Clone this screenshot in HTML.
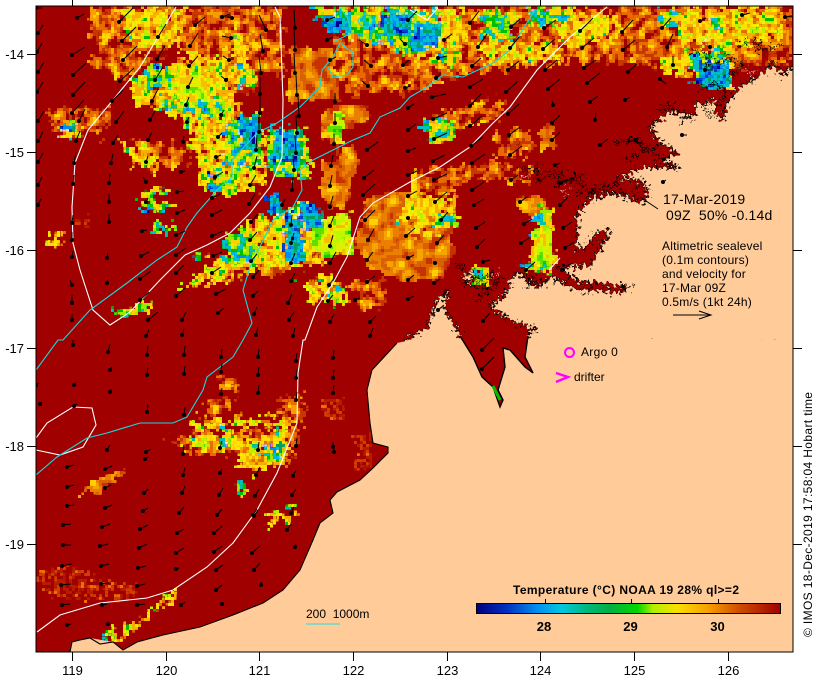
<!DOCTYPE html>
<html><head><meta charset="utf-8"><title>SST map</title>
<style>
html,body{margin:0;padding:0;background:#fff}
svg{display:block}
text{font-family:"Liberation Sans",sans-serif;fill:#000}
</style></head><body>
<svg width="820" height="680" viewBox="0 0 820 680" xmlns="http://www.w3.org/2000/svg">
<defs>
<filter id="px" filterUnits="userSpaceOnUse" x="36" y="6" width="757" height="646">
<feFlood x="37" y="7" width="1" height="1" flood-color="#000"/>
<feComposite width="3" height="3"/>
<feTile result="a"/>
<feComposite in="SourceGraphic" in2="a" operator="in"/>
<feMorphology operator="dilate" radius="1"/>
</filter>
<filter id="w" color-interpolation-filters="sRGB" filterUnits="userSpaceOnUse" x="0" y="0" width="820" height="680">
<feTurbulence type="fractalNoise" baseFrequency=".1" numOctaves="3" seed="4" result="n"/>
<feDisplacementMap in="SourceGraphic" in2="n" scale="26" xChannelSelector="R" yChannelSelector="G" result="d"/>
<feColorMatrix in="n" type="matrix" values="1 0 0 0 0 1 0 0 0 0 1 0 0 0 0 0 0 0 0 1"/>
<feComponentTransfer><feFuncR type="discrete" tableValues=".63 .63 .63 .63 .78 .91 .97 1 1 1"/><feFuncG type="discrete" tableValues="0 0 0 0 .22 .42 .62 .85 .85 .85"/><feFuncB type="discrete" tableValues="0 0"/></feComponentTransfer>
<feComposite in2="d" operator="in"/>
</filter>
<filter id="dm" color-interpolation-filters="sRGB" filterUnits="userSpaceOnUse" x="0" y="0" width="820" height="680">
<feTurbulence type="fractalNoise" baseFrequency=".2" numOctaves="2" seed="12" result="n"/>
<feDisplacementMap in="SourceGraphic" in2="n" scale="18" xChannelSelector="R" yChannelSelector="G" result="d"/>
<feColorMatrix in="n" type="matrix" values="1 0 0 0 0 1 0 0 0 0 1 0 0 0 0 0 0 0 0 1"/>
<feComponentTransfer><feFuncR type="discrete" tableValues=".63 .63 .63 .63 .63 .72 .82 .91 .91 .91"/><feFuncG type="discrete" tableValues="0 0 0 0 0 .12 .25 .45 .45 .45"/><feFuncB type="discrete" tableValues="0 0"/></feComponentTransfer>
<feComposite in2="d" operator="in"/>
</filter>
<filter id="o" color-interpolation-filters="sRGB" filterUnits="userSpaceOnUse" x="0" y="0" width="820" height="680">
<feTurbulence type="fractalNoise" baseFrequency=".07" numOctaves="2" seed="9" result="n"/>
<feDisplacementMap in="SourceGraphic" in2="n" scale="18" xChannelSelector="R" yChannelSelector="G" result="d"/>
<feColorMatrix in="n" type="matrix" values="1 0 0 0 0 1 0 0 0 0 1 0 0 0 0 0 0 0 0 1"/>
<feComponentTransfer><feFuncR type="discrete" tableValues=".78 .78 .78 .78 .86 .92 .96 1 1 1"/><feFuncG type="discrete" tableValues=".2 .2 .2 .2 .38 .5 .65 .82 .82 .82"/><feFuncB type="discrete" tableValues="0 0"/></feComponentTransfer>
<feComposite in2="d" operator="in"/>
</filter>
<filter id="m" color-interpolation-filters="sRGB" filterUnits="userSpaceOnUse" x="0" y="0" width="820" height="680">
<feTurbulence type="fractalNoise" baseFrequency=".12" numOctaves="3" seed="17" result="n"/>
<feDisplacementMap in="SourceGraphic" in2="n" scale="26" xChannelSelector="R" yChannelSelector="G" result="d"/>
<feColorMatrix in="n" type="matrix" values="1 0 0 0 0 1 0 0 0 0 1 0 0 0 0 0 0 0 0 1"/>
<feComponentTransfer><feFuncR type="discrete" tableValues=".63 .63 .63 .88 .97 1 .75 0 0 0"/><feFuncG type="discrete" tableValues="0 0 0 .44 .69 .88 .94 .75 .75 .75"/><feFuncB type="discrete" tableValues="0 0 0 0 0 0 0 0 .75 .75"/></feComponentTransfer>
<feComposite in2="d" operator="in"/>
</filter>
<filter id="c" color-interpolation-filters="sRGB" filterUnits="userSpaceOnUse" x="0" y="0" width="820" height="680">
<feTurbulence type="fractalNoise" baseFrequency=".13" numOctaves="3" seed="23" result="n"/>
<feDisplacementMap in="SourceGraphic" in2="n" scale="22" xChannelSelector="R" yChannelSelector="G" result="d"/>
<feColorMatrix in="n" type="matrix" values="1 0 0 0 0 1 0 0 0 0 1 0 0 0 0 0 0 0 0 1"/>
<feComponentTransfer><feFuncR type="discrete" tableValues="1 1 1 1 .63 0 0 0 0 0"/><feFuncG type="discrete" tableValues=".82 .82 .82 .82 .91 .75 .75 .56 0 0"/><feFuncB type="discrete" tableValues="0 0 0 0 0 0 .78 .94 .63 .63"/></feComponentTransfer>
<feComposite in2="d" operator="in"/>
</filter>
<filter id="l" color-interpolation-filters="sRGB" filterUnits="userSpaceOnUse" x="0" y="0" width="820" height="680">
<feTurbulence type="fractalNoise" baseFrequency=".08" numOctaves="2" seed="31" result="n"/>
<feDisplacementMap in="SourceGraphic" in2="n" scale="16" xChannelSelector="R" yChannelSelector="G" result="d"/>
<feColorMatrix in="n" type="matrix" values="1 0 0 0 0 1 0 0 0 0 1 0 0 0 0 0 0 0 0 1"/>
<feComponentTransfer><feFuncR type="discrete" tableValues=".97 .97 .97 .97 .88 .75 .38 0 0 0"/><feFuncG type="discrete" tableValues=".75 .75 .75 .75 .94 .97 .88 .82 .82 .82"/><feFuncB type="discrete" tableValues="0 0"/></feComponentTransfer>
<feComposite in2="d" operator="in"/>
</filter>
<filter id="b" color-interpolation-filters="sRGB" filterUnits="userSpaceOnUse" x="0" y="0" width="820" height="680">
<feTurbulence type="fractalNoise" baseFrequency=".14" numOctaves="3" seed="41" result="n"/>
<feDisplacementMap in="SourceGraphic" in2="n" scale="14" xChannelSelector="R" yChannelSelector="G" result="d"/>
<feColorMatrix in="n" type="matrix" values="1 0 0 0 0 1 0 0 0 0 1 0 0 0 0 0 0 0 0 1"/>
<feComponentTransfer><feFuncR type="discrete" tableValues="0 0"/><feFuncG type="discrete" tableValues=".63 .63 .63 .63 .75 .56 .25 0 0 0"/><feFuncB type="discrete" tableValues=".38 .38 .38 .38 .75 .94 .82 .56 .56 .56"/></feComponentTransfer>
<feComposite in2="d" operator="in"/>
</filter>
<filter id="j" filterUnits="userSpaceOnUse" x="0" y="0" width="820" height="680">
<feTurbulence type="fractalNoise" baseFrequency=".3" numOctaves="2" seed="7" result="n"/>
<feDisplacementMap in="SourceGraphic" in2="n" scale="18" xChannelSelector="R" yChannelSelector="G"/>
</filter>
<clipPath id="f"><rect x="36" y="6" width="757" height="646"/></clipPath>
<linearGradient id="cb"><stop offset="0" stop-color="#000080"/><stop offset=".1" stop-color="#0030c0"/><stop offset=".2" stop-color="#0090f0"/><stop offset=".28" stop-color="#00c8e0"/><stop offset=".36" stop-color="#00b880"/><stop offset=".44" stop-color="#00b040"/><stop offset=".53" stop-color="#00d800"/><stop offset=".58" stop-color="#b0f000"/><stop offset=".66" stop-color="#f8e000"/><stop offset=".76" stop-color="#f8a000"/><stop offset=".86" stop-color="#d05000"/><stop offset="1" stop-color="#a00000"/></linearGradient>
<path id="ar" d="M38 33l5-8M37 52l5-9M38 72l6-10M37 92l6-10M38 121l6-10M38 141l5-9M38 162l5-9M38 185l4-8M38 205l3-6
M77 18l7-4M72 55l13-8M73 75l13-12M73 95l12-13M72 113l12-13M79 121l6-12M76 141l4-10M74 163l2-11M73 184l1-9M72 223l1-8M72 240l0-8M72 257l1-6M72 285l-2-5M72 303l0-8M72 320l0-6
M119 22l14-14M122 41l14-14M123 60l14-14M120 81l14-13M112 101l11-11M116 122l8-11M113 143l5-8M111 163l2-9M109 183l1-9M109 202l0-8M109 222l0-8M107 258l1-5M107 283l1-4
M158 37l8-13M157 59l8-13M155 80l8-13M152 101l6-12M150 120l5-9M148 140l4-8M146 162l2-6M146 182l-3-5M146 202l2-4M142 231l5-1M141 256l8-4M140 279l11-8M140 300l9-8M148 320l10-8M146 336l3-6
M195 25l10-8M190 46l8-13M189 66l9-10M188 87l5-10M186 105l3-8M187 122l2-5M183 142l1-6M181 172l4-1M177 192l7-1M177 213l8-3M176 235l9-4M176 255l10-7M176 273l8-8M176 296l9-8M182 320l4-8M182 335l2-6
M222 17l8-3M232 18l-8-2M231 38l-9-2M229 60l-6-4M226 80l-5-4M221 115l3-5M218 137l4-4M216 157l5-2M215 177l8-5M212 198l8-4M212 215l10-5M212 236l11-5M213 256l9-4M212 273l9-6M216 294l10-5M218 313l6-5
M266 30l-7-15M263 51l-3-17M261 73l-2-18M260 94l0-17M260 113l0-17M259 132l0-17M256 150l1-15M254 168l3-12M250 185l6-10M249 204l6-10M251 222l7-8M250 240l7-8M251 261l6-7M253 277l6-7M253 296l5-5M254 314l3-7M256 335l2-8
M295 28l-1-18M295 50l-1-20M295 73l-1-20M297 95l-1-20M299 116l-1-20M297 133l-1-18M296 153l-1-17M294 170l-1-15M292 190l1-12M282 205l3-6M291 225l1-10M291 243l3-10M291 263l4-10M291 281l4-8M288 303l4-9M289 320l5-8M293 336l2-8
M327 20l8-3M327 40l6-3M330 60l6-3M335 102l0-9M335 123l0-10M334 144l0-10M331 166l2-11M330 186l2-11M330 207l3-11M330 226l4-10M330 246l3-11M330 263l6-11M329 285l6-8M328 301l5-6M330 322l4-8
M367 45l-8-5M371 66l-7-6M368 86l-6-5M367 150l11-8M364 178l10-8M363 195l12-11M365 220l10-10M368 240l6-11M367 260l6-8M367 282l8-6M355 300l5-2M370 322l6-6M370 336l3-8
M408 20l9-9M405 44l-5-5M403 65l6-5M405 88l5-2M408 108l6-4M408 130l8-6M408 151l8-3M408 175l9-4M408 196l9-5M408 218l-2 0M406 236l9-8M408 258l6-3M408 280l6-5M408 299l6-3
M444 40l8-6M438 58l9-2M436 78l5-5M432 97l14-3M433 119l14-6M434 139l13-6M433 161l12-6M434 180l13-6M435 202l12-10M441 220l7-8M437 243l7-8M435 263l-2-1M434 283l6-4M438 310l6-5
M478 47l9-13M470 23l9-12M472 66l9-8M470 87l13-8M470 106l11-12M470 126l12-10M471 146l12-9M472 163l13-9M472 190l12-8M474 205l10-6M476 228l9-6M477 247l8-8M483 262l7-2M483 321l7-8M482 350l12-12M482 369l12-12
M510 48l9-11M511 27l9-8M508 70l11-9M506 92l11-10M508 114l11-10M509 135l11-8M510 155l12-9M511 180l7-5M520 202l7-5M524 224l8-5M521 243l8-5M526 270l9-8
M544 28l12-8M543 49l12-10M545 70l12-10M548 89l12-10M553 105l-1-4M552 123l8-8M552 140l8-8M555 165l5-2M561 183l6-4M560 205l8-8M563 228l9-6M565 248l9-6M562 270l9-6
M580 31l13-13M582 48l12-10M584 68l12-8M587 83l13-10M590 102l8-6M595 120l1-7M600 145l8-6
M622 32l11-12M623 50l12-10M628 72l9-8M625 100l5-3M635 140l3-3M663 182l3-2
M662 28l9-10M667 47l6-13M673 65l0-9M660 79l6 5M682 135l5 0M705 70l8 0
M700 21l6-3M742 15l8-2M785 17l8-1M710 47l-1 0
M36 8l6 0
M73 345l0-5M108 352l2-8M147 355l1-9M184 355l1-9M221 357l1-8M258 357l1-8M296 361l1-8M333 358l1-8
M36 385l3-2M74 385l2-3M110 370l2-3M147 375l1-8M184 374l1-8M221 372l1-8M258 375l1-8M296 378l1-8M333 378l1-8
M40 404l2-2M74 406l3-2M110 392l1-3M147 412l1-7M184 415l1-8M221 394l1-6M258 393l1-8M296 400l1-8M333 393l1-8
M107 450l3-5M146 452l5-3M183 454l1-9M220 448l2-7M258 450l1-8M296 446l1-8M334 452l0-7
M67 467l7-2M105 469l7-3M145 459l3-2M183 475l2-7M220 473l2-4M256 475l4-8M293 476l3-6M333 447l0-5
M67 487l7-2M105 488l6-3M144 493l4-4M182 493l3-7M219 495l4-7M255 496l4-7M292 495l4-6
M67 506l7-1M105 508l7-3M143 511l5-3M179 513l5-6M217 515l5-6M254 516l4-6M291 513l3-6
M63 525l8-1M102 527l8-3M140 529l8-4M177 533l7-4M214 533l8-7M253 515l4-6M287 530l4-6
M63 525l8-1M63 545l8 0M100 546l8-2M139 548l8-4M176 553l8-5M214 552l8-6M252 553l8-7M295 547l1-3
M62 566l10-2M101 566l8-2M138 568l8-2M176 569l3-1M216 570l7-5M254 570l6-7
M61 585l10-1M101 584l8-1M137 586l8-2M216 590l6-5M261 585l0-3
M62 605l8-1M102 605l5-1M137 605l8-1M181 605l4-3M222 604l1-2
M67 625l4-1M108 624l2-1"/>
</defs>
<rect width="820" height="680" fill="#fff"/>
<g clip-path="url(#f)">
<rect x="36" y="6" width="757" height="646" fill="#a00000"/>
<g filter="url(#px)">
<g filter="url(#dm)" fill="#000">
<polygon points="40,572 75,565 105,580 138,585 135,600 60,598 40,590"/>
<polygon points="322,400 345,395 345,420 325,420"/>
<polygon points="75,218 92,215 90,226 78,225"/>
<polygon points="355,435 372,432 372,468 358,470"/>
<polygon points="195,60 260,60 260,95 200,90"/>
</g>
<g filter="url(#o)" fill="#000">
<polygon points="290,48 335,48 338,100 290,100"/>
<polygon points="325,108 365,108 372,118 345,125 335,150 322,125"/>
<polygon points="322,165 352,146 358,160 345,208 328,208 322,190"/>
<polygon points="365,200 400,190 448,210 452,250 440,278 400,280 375,272 355,245"/>
<polygon points="200,6 280,6 280,35 230,50 200,40"/>
<polygon points="515,195 545,198 548,212 525,214"/>
<polygon points="537,128 553,128 557,150 543,150"/>
<polygon points="262,255 285,248 290,262 280,280 262,272"/>
<polygon points="78,494 100,483 125,469 113,484 90,494"/>
</g>
<g filter="url(#w)" fill="#000">
<polygon points="90,8 160,8 165,55 125,78 92,62"/>
<polygon points="160,8 285,8 285,80 230,65 185,50"/>
<polygon points="330,8 793,8 793,58 735,68 700,78 640,62 560,62 470,72 410,92 350,95 335,60"/>
<polygon points="50,108 115,110 105,135 55,135"/>
<polygon points="135,140 190,145 190,165 150,170"/>
<polygon points="515,160 430,200 410,195 420,170"/>
<polygon points="430,120 445,110 510,100 505,115 440,135"/>
<polygon points="497,133 530,128 537,155 500,157"/>
<polygon points="350,280 385,280 390,310 350,305"/>
<polygon points="480,165 540,170 530,180 480,180"/>
<polygon points="170,438 205,432 300,428 298,452 250,458 215,455 175,445"/>
<polygon points="205,400 235,400 232,412 208,412"/>
<polygon points="273,400 305,395 305,425 280,412"/>
<polygon points="218,370 240,385 235,395 220,385"/>
</g>
<g filter="url(#m)" fill="#000">
<polygon points="130,78 175,70 235,85 240,118 200,125 160,110 132,100"/>
<polygon points="187,120 245,125 262,150 268,185 230,195 200,185"/>
<polygon points="120,140 160,150 155,170 130,165"/>
<polygon points="175,290 205,270 250,250 262,268 215,282"/>
<polygon points="240,225 310,205 330,260 290,270 250,262"/>
<polygon points="190,438 240,435 245,450 195,448"/>
<polygon points="250,440 290,430 285,462 262,470 240,470 240,458"/>
<polygon points="190,420 290,416 290,426 190,428"/>
<polygon points="107,636 150,612 178,588 178,596 120,642"/>
<polygon points="120,8 185,10 180,45 140,50"/>
<polygon points="170,60 200,55 250,62 250,85 170,85"/>
<polygon points="240,30 250,40 245,60 230,55"/>
<polygon points="395,10 465,10 470,40 440,62 405,55"/>
<polygon points="480,45 560,45 560,60 485,65"/>
<polygon points="560,14 620,15 625,35 580,45 560,40"/>
<polygon points="680,10 780,8 785,35 720,50 680,40"/>
<polygon points="660,60 700,50 695,75 665,75"/>
<polygon points="413,190 455,200 450,228 415,240 400,220"/>
<polygon points="300,280 335,275 340,300 315,305"/>
<polygon points="50,232 62,232 62,243 50,243"/>
<polygon points="268,515 296,513 295,522 270,522"/>
</g>
<g filter="url(#c)" fill="#000">
<polygon points="310,8 420,8 445,30 420,58 390,45 345,35"/>
<polygon points="480,10 520,12 510,35 485,35"/>
<polygon points="145,62 178,65 175,90 150,90"/>
<polygon points="240,66 255,68 255,88 240,88"/>
<polygon points="160,100 225,100 228,118 170,112"/>
<polygon points="230,120 260,115 262,165 225,165"/>
<polygon points="265,130 305,128 310,178 270,175"/>
<polygon points="212,175 240,175 235,195 212,192"/>
<polygon points="225,235 250,228 265,262 225,265"/>
<polygon points="135,192 170,190 170,196 137,198"/>
<polygon points="150,195 156,195 156,213 150,213"/>
<polygon points="140,207 172,203 172,208 140,212"/>
<polygon points="150,225 178,225 178,232 152,232"/>
<polygon points="195,250 205,252 200,262"/>
<polygon points="480,30 500,25 520,35 490,45"/>
<polygon points="530,8 575,8 570,22 530,25"/>
<polygon points="690,52 730,50 732,88 695,85"/>
<polygon points="660,10 680,10 680,25 660,25"/>
<polygon points="712,20 725,20 725,30 712,30"/>
<polygon points="418,122 455,117 455,138 430,142"/>
<polygon points="410,10 440,10 445,30 410,40"/>
<polygon points="440,50 460,50 460,65 440,65"/>
<polygon points="437,213 457,213 457,227 437,227"/>
<polygon points="472,268 488,268 486,288 472,288"/>
<polygon points="535,210 550,208 552,245 535,245"/>
<polygon points="525,262 555,255 552,270 525,272"/>
<polygon points="220,428 230,425 232,447 220,450"/>
<polygon points="262,450 285,445 283,462 265,462"/>
<polygon points="107,632 118,630 118,640 107,640"/>
<polygon points="112,314 150,302 148,310 122,318"/>
<polygon points="330,290 345,288 345,303 330,303"/>
<polygon points="288,503 296,503 296,510 288,510"/>
<polygon points="236,485 245,480 247,495 237,495"/>
<polygon points="60,125 75,122 80,138 60,138"/>
</g>
<g filter="url(#l)" fill="#000">
<polygon points="312,220 350,212 356,255 325,258 312,245"/>
<polygon points="530,232 552,230 557,262 538,268 528,255"/>
<polygon points="170,80 200,70 210,98 180,102"/>
<polygon points="330,110 345,112 345,145 330,140"/>
</g>
<g filter="url(#b)" fill="#000">
<polygon points="240,118 258,115 258,150 240,150"/>
<polygon points="272,130 300,130 300,165 272,160"/>
<polygon points="300,203 320,205 322,228 303,230"/>
<polygon points="285,215 300,215 305,262 285,262"/>
<polygon points="265,195 280,195 282,215 270,215"/>
<polygon points="695,60 730,60 730,88 700,88"/>
<polygon points="322,15 350,15 350,32 325,32"/>
<polygon points="380,15 410,12 410,35 385,35"/>
<polygon points="412,30 440,25 440,45 412,45"/>
<polygon points="272,445 283,445 280,452 272,452"/>
<polygon points="62,125 75,125 75,132 62,132"/>
</g>
</g>
<!-- north coast, jagged -->
<g filter="url(#j)">
<path d="M400 345L415 335L427 327L437 300L447 290L445 310L460 333L460 345L473 357L482 377L493 387L500 407L503 400L498 390L505 367L503 348L510 350L525 367L533 373L525 357L528 340L520 338L537 330L510 320L490 307L507 293L510 280L517 273L537 287L553 277L577 290L597 290L617 293L630 287L597 283L580 283L560 267L590 265L600 250L610 230L597 232L585 248L577 250L577 213L590 200L610 193L627 197L640 203L648 198L642 180L617 180L637 170L650 167L680 168L663 160L677 153L657 140L650 127L670 110L693 117L697 100L723 120L727 103L740 87L757 77L773 63L782 75L793 67L800 67L800 345Z" fill="#ffcb99" stroke="#000" stroke-width="1.6"/>
<path d="M457 265l20 12l-12 6l22 5l-9 12M470 275l18 4l-6 12l14-4M515 272l18 4l-6 10l20-6M520 170l20-3l-5 14l28-10l-5 14l28-12M560 178l20 4l10 12l20-6M590 190l25-6l10 12M615 143l20-3l10 12l-20 8M628 140l20 6l14 14l10 8M690 50l20 5l-5 12l25-10l14 8l-18 14M700 90l14-8l12 10l-8 14M740 45l20-4l-4 10l25-6M655 110l16-4l18 10l-10 8M490 272l10 10l-8 4M575 195l12-6l10 9" fill="none" stroke="#000" stroke-width="2.6" stroke-dasharray="4 2 2 3"/>
<path d="M632 190l8-6l8 3l-2 12l-8 4z" fill="#a00000" stroke="#000"/>
<path d="M472 268l-8 10l6 8M705 102l10-2l0 14l-8 2z" fill="#ffcb99" stroke="#000"/>
<path d="M700 42l12-4M722 62l10 4M745 70l8 4M520 178l10-2M560 190l8 3M500 270l-8 8" stroke="#fff" stroke-width="1.2" stroke-dasharray="3 2" fill="none"/>
</g>
<!-- south coast -->
<polygon points="70,660 70,652 72,642 90,638 113,642 123,650 137,642 163,635 200,627 233,615 263,603 283,590 300,570 313,540 320,523 333,513 330,500 337,492 360,480 373,468 388,453 388,447 373,443 370,423 367,390 372,370 397,343 420,338 800,340 800,660" fill="#ffcb99"/>
<path d="M70 652L72 642L80 640L90 638L100 644L113 642L123 650L137 642L163 635L200 627L233 615L263 603L283 590L300 570L313 540L320 523L333 513L330 500L337 492L360 480L373 468L388 453L388 447L373 443L370 423L367 390L372 370L397 343" fill="none" stroke="#000" stroke-width="1.1"/>
<!-- peninsula tip over the south polygon -->
<path d="M460 336L473 357L482 377L493 387L500 407L503 400L498 390L505 367L503 348L510 350L525 367L533 373L525 357L528 336Z" fill="#a00000"/>
<path d="M460 336L473 357L482 377L493 387L500 407L503 400L498 390L505 367L503 348L510 350L525 367L533 373L525 357L528 336" fill="none" stroke="#000" stroke-width="1.4"/>
<path d="M493 386l7 14" stroke="#00c000" stroke-width="3" fill="none"/>
<!-- contours -->
<g fill="none" stroke="#fff" stroke-width="1.1">
<polyline points="176,7 158,37 140,67 113,100 88,130 75,163 72,207 73,243 80,270 93,310 110,325 130,312 160,280 185,255 207,245 230,233 250,213 270,187 282,157 283,100 280,17 275,7"/>
<polyline points="297,423 298,373 303,340 305,340 317,307 333,283 347,257 360,217 373,203 410,182 440,167 470,147 493,123 510,107 537,70 570,37 607,7"/>
<polyline points="297,423 277,473 257,510 233,543 207,567 173,590 147,598 100,603 60,615 37,632"/>
<polyline points="36,438 47,423 73,407 92,408 96,425 83,447 60,455 36,450"/>
<polyline points="410,10 427,20 438,8"/>
<polyline points="549,270 560,258"/>
</g>
<g fill="none" stroke="#18d8e0" stroke-width="1.1">
<polyline points="36,370 58,340 63,340 90,310 127,283 157,260 177,247 187,227 197,213 217,190 232,177 232,160 257,133 277,123 300,107 320,87 322,70 333,57 340,43 353,53 353,67 347,75 333,77 328,67"/>
<polyline points="36,475 57,457 87,438 107,433 140,423 173,423 187,417 203,390 207,377 233,357 243,340 252,323 243,290 250,267 273,220 293,207 302,190 300,170 313,160 353,140 370,133 380,117 400,108 410,97 427,87 443,75 463,77 493,63 510,50 535,10"/>
<polyline points="340,8 347,17 352,33 333,42"/>
<polyline points="358,20 366,13 373,20 368,28 360,25 358,20"/>
</g>
<!-- arrows -->
<g stroke="#000" fill="none">
<use href="#ar" stroke-width="1"/>
<use href="#ar" stroke-width="4" stroke-linecap="round" stroke-dasharray="0 100"/>
</g>
<path d="M640 197L658 209" stroke="#000" fill="none"/>
</g>
<!-- frame + ticks -->
<rect x="36" y="6" width="757" height="646" fill="none" stroke="#000" stroke-width="1"/>
<path d="M72.5 0V6M166.5 0V6M259.5 0V6M353.5 0V6M447.5 0V6M540.5 0V6M634.5 0V6M728.5 0V6M72.5 652V661M166.5 652V661M259.5 652V661M353.5 652V661M447.5 652V661M540.5 652V661M634.5 652V661M728.5 652V661M27 54.5H36M27 152.5H36M27 250.5H36M27 348.5H36M27 446.5H36M27 544.5H36M793 54.5H802M793 152.5H802M793 250.5H802M793 348.5H802M793 446.5H802M793 544.5H802" stroke="#000" fill="none"/>
<g font-size="13" text-anchor="end">
<text x="24" y="59">-14</text><text x="24" y="157">-15</text><text x="24" y="255">-16</text><text x="24" y="353">-17</text><text x="24" y="451">-18</text><text x="24" y="549">-19</text>
</g>
<g font-size="13" text-anchor="middle">
<text x="72.5" y="675">119</text><text x="166.5" y="675">120</text><text x="259.5" y="675">121</text><text x="353.5" y="675">122</text><text x="447.5" y="675">123</text><text x="540.5" y="675">124</text><text x="634.5" y="675">125</text><text x="728.5" y="675">126</text>
</g>
<text x="663" y="204" font-size="14" letter-spacing=".2">17-Mar-2019</text>
<text x="666" y="220" font-size="14" xml:space="preserve" letter-spacing=".2">09Z  50% -0.14d</text>
<g font-size="12" letter-spacing=".2">
<text x="662" y="250">Altimetric sealevel</text>
<text x="662" y="264">(0.1m contours)</text>
<text x="662" y="278">and velocity for</text>
<text x="662" y="292">17-Mar 09Z</text>
<text x="662" y="306">0.5m/s (1kt 24h)</text>
</g>
<path d="M673 315H711M699 311L711 315L699 319" stroke="#000" fill="none"/>
<circle cx="569.5" cy="352.5" r="4.5" fill="none" stroke="#ff00ff" stroke-width="2"/>
<text x="581" y="356" font-size="12" letter-spacing=".3">Argo 0</text>
<path d="M556 373L568 377L556 382" fill="none" stroke="#ff00ff" stroke-width="2.4"/>
<text x="574" y="381" font-size="12">drifter</text>
<text x="306" y="618" font-size="12" xml:space="preserve">200  1000m</text>
<path d="M306 624H340" stroke="#18e0e8" stroke-width="1"/>
<text x="513" y="594" font-size="12" font-weight="bold" textLength="226">Temperature (°C) NOAA 19 28% ql&gt;=2</text>
<path d="M545.5 599V603M631.5 599V603M718.5 599V603" stroke="#000"/>
<rect x="476.5" y="603.5" width="304" height="10" fill="url(#cb)" stroke="#000"/>
<g font-size="13" font-weight="bold" text-anchor="middle">
<text x="544" y="631">28</text><text x="630.5" y="631">29</text><text x="717.5" y="631">30</text>
</g>
<text transform="translate(812,637) rotate(-90)" font-size="12" textLength="245">© IMOS 18-Dec-2019 17:58:04 Hobart time</text>
</svg>
</body></html>
